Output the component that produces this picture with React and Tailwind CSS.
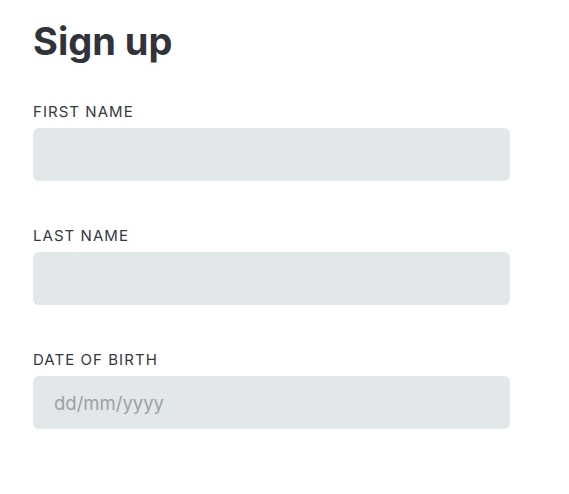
export default function App() {
  const field = "w-[477px] h-[53px] rounded-md bg-[#e2e7ea] px-[21px] text-[18.5px] text-[#2d3038] outline-none placeholder:text-[#9ca0a5]";
  const label = "block h-[20px] text-[15px] leading-[20px] tracking-[0.07em] text-[#35383f] uppercase";
  return (
    <div className="min-h-[494px] bg-white px-[33px] pt-[18px] font-['Inter',sans-serif]">
      <h1 className="text-[38px] leading-[46px] font-bold text-[#30333a]">Sign up</h1>
      <form className="mt-[38px] flex flex-col">
        <label className={label}>First name</label>
        <input type="text" className={"mt-[6px] " + field} />
        <label className={"mt-[45px] " + label}>Last name</label>
        <input type="text" className={"mt-[6px] " + field} />
        <label className={"mt-[45px] " + label}>Date of birth</label>
        <input type="text" placeholder="dd/mm/yyyy" className={"mt-[6px] " + field} />
      </form>
    </div>
  );
}
